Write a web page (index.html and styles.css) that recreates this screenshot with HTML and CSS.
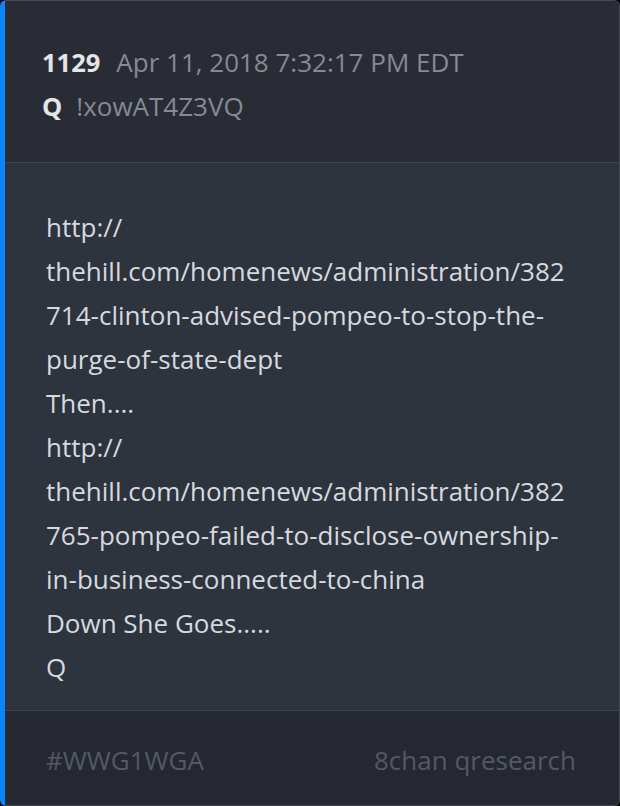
FILE: index.html
```html
<!DOCTYPE html>
<html>
<head>
<meta charset="utf-8">
<link rel="stylesheet" href="styles.css">
</head>
<body>
<div class="card">
  <div class="head">
    <div class="row"><span class="num">1129</span><span class="meta">Apr 11, 2018 7:32:17 PM EDT</span></div>
    <div class="row row-q"><span class="num">Q</span><span class="meta">!xowAT4Z3VQ</span></div>
  </div>
  <div class="body">
    http://<br>
    thehill.com/homenews/administration/382<br>
    714-clinton-advised-pompeo-to-stop-the-<br>
    purge-of-state-dept<br>
    Then....<br>
    http://<br>
    thehill.com/homenews/administration/382<br>
    765-pompeo-failed-to-disclose-ownership-<br>
    in-business-connected-to-china<br>
    Down She Goes.....<br>
    Q
  </div>
  <div class="foot">
    <span>#WWG1WGA</span>
    <span>8chan qresearch</span>
  </div>
</div>
</body>
</html>
```
FILE: styles.css
```css
html, body {
  margin: 0;
  padding: 0;
  background: #000;
}
body {
  font-family: "Open Sans", "Noto Sans", sans-serif;
  width: 620px;
  height: 806px;
}
.card {
  box-sizing: border-box;
  width: 620px;
  height: 806px;
  border: 1px solid #454b56;
  border-left: 5px solid #0a84ff;
  border-radius: 6px;
  background: #2e343e;
  overflow: hidden;
  display: flex;
  flex-direction: column;
}
.head {
  background: #292c34;
  padding: 39px 40px 34px 37px;
  border-bottom: 1px solid #3e444f;
  font-size: 26px;
  line-height: 44px;
}
.row {
  display: flex;
  gap: 16px;
  align-items: baseline;
}
.row-q {
  gap: 14px;
}
.num {
  color: #e4e5e7;
  font-weight: 700;
  font-size: 25.5px;
}
.meta {
  color: #858a95;
}
.body {
  flex: 1;
  color: #d6d9de;
  font-size: 26px;
  line-height: 44px;
  padding: 42px 40px 19px 41px;
}
.foot {
  background: #252830;
  border-top: 1px solid #3e444f;
  display: flex;
  justify-content: space-between;
  padding: 27px 43px 23px 41px;
  font-size: 26px;
  line-height: 44px;
  color: #535966;
}
```
